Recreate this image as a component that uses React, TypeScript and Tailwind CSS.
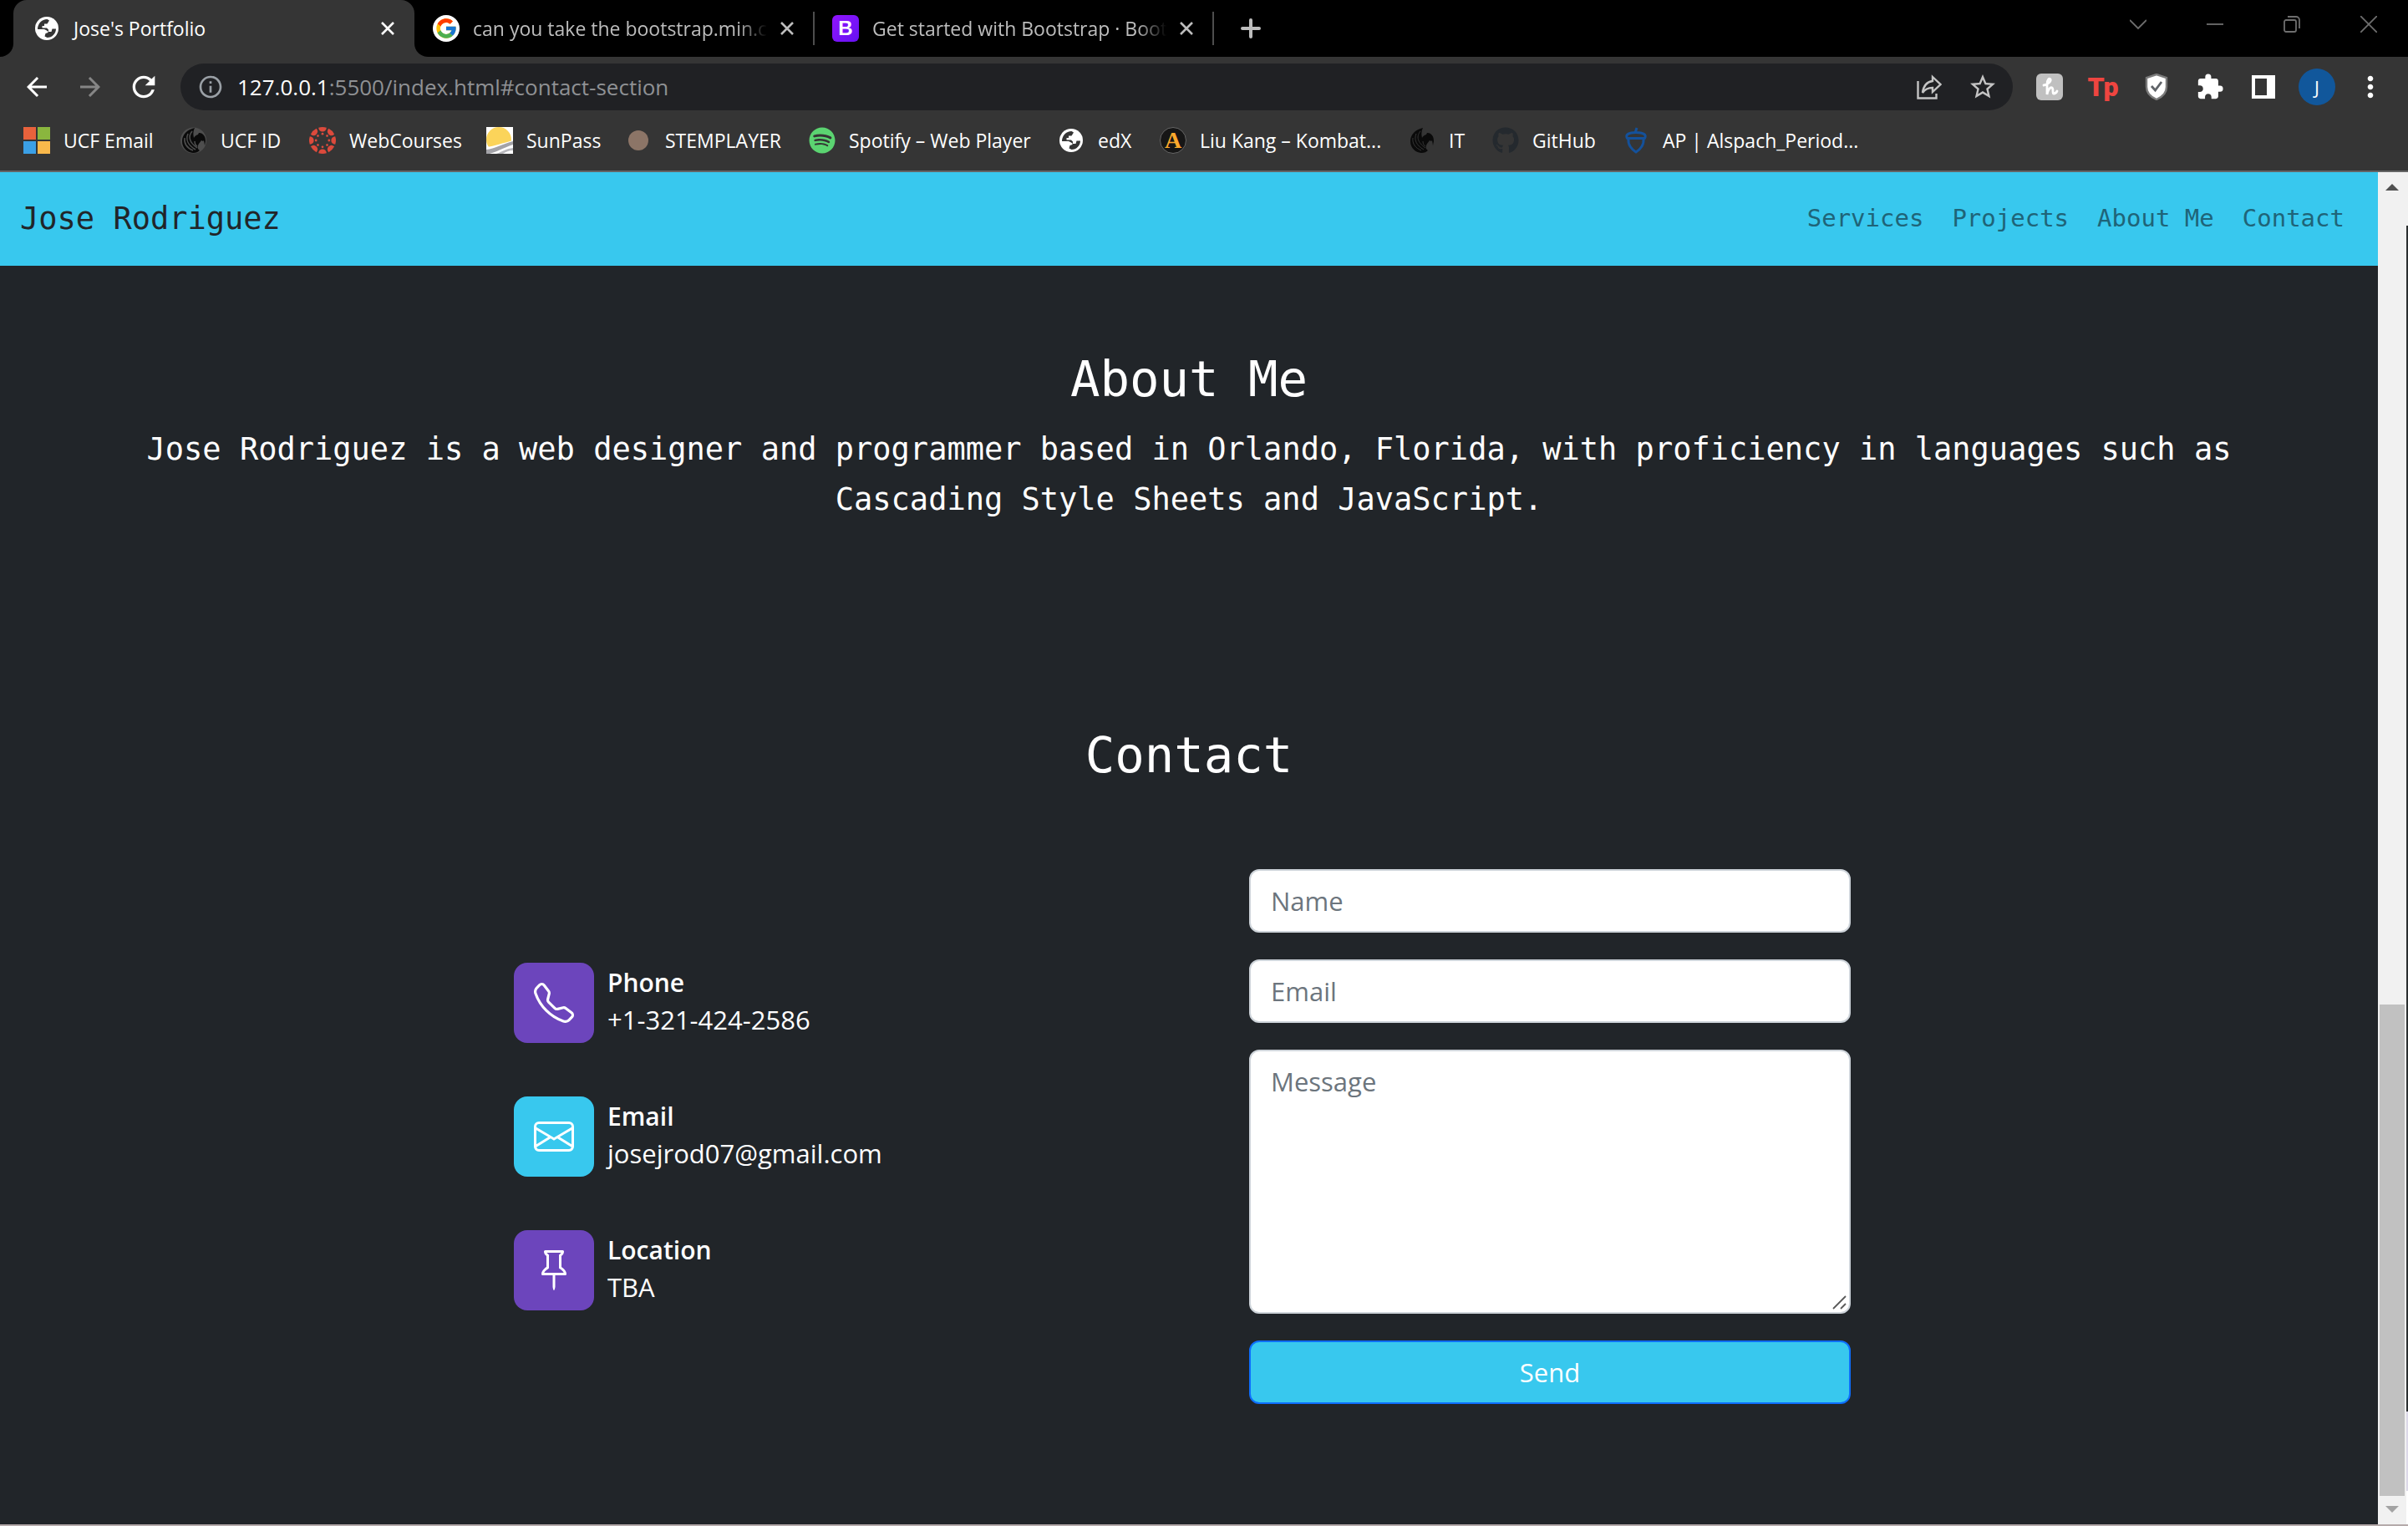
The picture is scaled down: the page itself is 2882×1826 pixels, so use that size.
import React from "react";
import { BsTelephone, BsEnvelope, BsPin } from "react-icons/bs";
import { FaSpotify, FaGithub } from "react-icons/fa";
import { FcGoogle } from "react-icons/fc";
import {
  MdArrowBack,
  MdArrowForward,
  MdRefresh,
  MdInfoOutline,
  MdExtension,
  MdMoreVert,
  MdStarBorder,
} from "react-icons/md";

const UI = "font-['Open_Sans','Noto_Sans',sans-serif]";

function Globe() {
  return (
    <svg viewBox="0 0 28 28" className="size-7">
      <circle cx="14" cy="14" r="14" fill="#fff" />
      <path d="M3 15C3 8.500 8 3 14.500 3l2.500 1.500-2.500 4H11V11H8.500v2.500H14l2 2V18h3.500l1-3.500H25C25 20 20.500 25 14.500 25l-3-1.500 1-3.500 3-1v-1.500l-2.500-1.500-2-1z" fill="#353535" />
    </svg>
  );
}

function CloseX() {
  return (
    <svg viewBox="0 0 16 16" className="size-4" fill="none" stroke="currentColor" strokeWidth="2.600">
      <path d="M1 1l14 14M15 1L1 15" />
    </svg>
  );
}

function BootstrapLogo() {
  return (
    <span className="flex size-8 shrink-0 items-center justify-center rounded-md bg-linear-to-br from-[#9013fe] to-[#6610f2] font-['Liberation_Sans',sans-serif] text-2xl leading-8 font-bold text-white">
      B
    </span>
  );
}

function MicrosoftLogo() {
  return (
    <svg viewBox="0 0 32 32" className="size-8">
      <path d="M0 0h15v15H0z" fill="#e8623c" />
      <path d="M17 0h15v15H17z" fill="#8ab63e" />
      <path d="M0 17h15v15H0z" fill="#3ba0e6" />
      <path d="M17 17h15v15H17z" fill="#f9b84b" />
    </svg>
  );
}

function Pegasus({ backed = false }: { backed?: boolean }) {
  return (
    <svg viewBox="0 0 32 32" className="size-8">
      {backed && <circle cx="15.500" cy="16" r="15.500" fill="#4e4e4e" />}
      <path
        d="M17 1C8 3 2 9 2 17c0 8 6 13.500 13 14 4 0 6-1 8-3-2-1-3-3-2-6 1-3 3-4 4-6l2 1 1-1 1 6 1-5c0-4-1-7-4-9-1-1-3-1-4-1l-1 2c-3 1-4 2-5 4-1-4-1-8 1-12z"
        fill="#0a0a0a"
      />
      <path
        d="M14 5c-5 6-4 13 6 20M9 8c-3 7 0 14 9 19M5 13c-1 7 3 12 10 15M17 17c0 3 1 5 3 6"
        fill="none"
        stroke={backed ? "#4e4e4e" : "#353535"}
        strokeWidth={backed ? "1.500" : "1"}
      />
    </svg>
  );
}

function CanvasLogo() {
  const angles = [0, 45, 90, 135, 180, 225, 270, 315];
  return (
    <svg viewBox="0 0 32 32" className="size-8" fill="#dc4a3c">
      {angles.map((a) => (
        <g key={a} transform={`rotate(${a} 16 16)`}>
          <path d="M11.200 0.800 Q16 -0.800 20.800 0.800 Q20.300 5.600 16 5.600 Q11.700 5.600 11.200 0.800 Z" />
          <circle cx="16" cy="8.200" r="1.400" />
        </g>
      ))}
    </svg>
  );
}

function SunPassLogo() {
  return (
    <svg viewBox="0 0 32 32" className="size-8">
      <path d="M0 0h32v32H0z" fill="#fff" />
      <circle cx="15" cy="15" r="15" fill="#fbd45a" />
      <path d="M0 24c10-1 20-5 32-8v16H0z" fill="#fff" />
      <path d="M0 27c10-1 20-7 32-10v4C20 25 12 30 4 32H0z" fill="#a3a3a8" />
      <path d="M12 32c8-3 12-6 20-7v3c-5 0-9 2-12 4z" fill="#b9b9bd" />
    </svg>
  );
}

function Dot() {
  return (
    <svg viewBox="0 0 32 32" className="size-8">
      <circle cx="16" cy="16" r="12" fill="#8c7567" />
    </svg>
  );
}

function ArcadeLogo() {
  return (
    <span className="flex size-8 items-center justify-center rounded-full border border-[#666] bg-[#161616] font-['Liberation_Serif',serif] text-[28px] leading-7 font-bold text-[#fba92c]">
      A
    </span>
  );
}

function Acorn() {
  return (
    <svg viewBox="0 0 32 32" className="size-8" fill="none" stroke="#14519b" strokeWidth="3">
      <path d="M15 7l2-6M6 14c-4-5 2-7.500 10-7.500S30 9 26 14M5 13.500h22" />
      <path d="M7 14c-1 7 4 13 9 16 5-3 10-9 9-16" />
    </svg>
  );
}

const bookmarks: { label: string; width: string; icon: React.ReactNode }[] = [
  { label: "UCF Email", width: "w-[188px]", icon: <MicrosoftLogo /> },
  { label: "UCF ID", width: "w-[154px]", icon: <Pegasus backed /> },
  { label: "WebCourses", width: "w-[212px]", icon: <CanvasLogo /> },
  { label: "SunPass", width: "w-[166px]", icon: <SunPassLogo /> },
  { label: "STEMPLAYER", width: "w-[220px]", icon: <Dot /> },
  { label: "Spotify – Web Player", width: "w-[298px]", icon: <FaSpotify className="size-8 text-[#5bd471]" /> },
  { label: "edX", width: "w-[122px]", icon: <Globe /> },
  { label: "Liu Kang – Kombat...", width: "w-[298px]", icon: <ArcadeLogo /> },
  { label: "IT", width: "w-[100px]", icon: <Pegasus /> },
  { label: "GitHub", width: "w-[156px]", icon: <FaGithub className="size-8 text-[#24292e]" /> },
  { label: "AP | Alspach_Period...", width: "w-[280px]", icon: <Acorn /> },
];

function TabStrip() {
  return (
    <div className="flex h-[68px] items-stretch bg-black text-[#bdbdbd]">
      <div className="flex w-4 items-end bg-[#353535]">
        <div className="h-full w-full rounded-br-2xl bg-black" />
      </div>
      <div className="bg-black">
        <div className="flex h-full w-[480px] items-center rounded-t-2xl bg-[#353535] pr-6 pl-[26px] text-white">
          <Globe />
          <span className="ml-[18px] flex-1 text-[23px]">Jose's Portfolio</span>
          <button aria-label="Close tab">
            <CloseX />
          </button>
        </div>
      </div>
      <div className="flex w-4 bg-[#353535]">
        <div className="h-full w-full rounded-bl-2xl bg-black" />
      </div>
      <div className="flex w-[461px] items-center pr-[23px] pl-[6px]">
        <span className="flex size-8 shrink-0 items-center justify-center rounded-full bg-white">
          <FcGoogle className="size-7" />
        </span>
        <span className="mr-4 ml-4 flex-1 overflow-hidden text-[23px] whitespace-nowrap mask-r-from-90% mask-r-to-100%">
          can you take the bootstrap.min.cs
        </span>
        <button aria-label="Close tab">
          <CloseX />
        </button>
      </div>
      <div className="my-auto h-10 w-[2px] bg-[#4d4d4d]" />
      <div className="flex w-[476px] items-center pr-[23px] pl-[21px]">
        <BootstrapLogo />
        <span className="mr-4 ml-4 flex-1 overflow-hidden text-[23px] whitespace-nowrap mask-r-from-90% mask-r-to-100%">
          Get started with Bootstrap · Boots
        </span>
        <button aria-label="Close tab">
          <CloseX />
        </button>
      </div>
      <div className="my-auto h-10 w-[2px] bg-[#4d4d4d]" />
      <button aria-label="New tab" className="ml-8">
        <svg viewBox="0 0 24 24" className="size-6" stroke="currentColor" strokeWidth="4" strokeLinecap="round">
          <path d="M12 2v20M2 12h20" />
        </svg>
      </button>
      <div className="ml-auto flex h-[58px] items-center pr-[1px] text-[#6e6e6e]">
        {[
          ["Search tabs", "M0 5l10 10L20 5"],
          ["Minimize", "M0 10h20"],
          ["Restore", "M3 5h10a2 2 0 0 1 2 2v10a2 2 0 0 1-2 2H3a2 2 0 0 1-2-2V7a2 2 0 0 1 2-2zM5 1h10a4 4 0 0 1 4 4v10"],
          ["Close window", "M0 0l20 20M20 0L0 20"],
        ].map(([name, d]) => (
          <button key={name} aria-label={name} className="flex w-[92px] justify-center">
            <svg viewBox="0 0 20 20" className="size-5" fill="none" stroke="currentColor" strokeWidth="1.800">
              <path d={d} />
            </svg>
          </button>
        ))}
      </div>
    </div>
  );
}

function Toolbar() {
  const tool = "flex w-16 items-center justify-center";
  return (
    <div className="flex h-[72px] items-center bg-[#353535] pr-[13px] pl-3 text-white">
      <button aria-label="Back" className={tool}>
        <MdArrowBack className="size-9" />
      </button>
      <button aria-label="Forward" className={`${tool} text-[#868686]`}>
        <MdArrowForward className="size-9" />
      </button>
      <button aria-label="Reload" className={tool}>
        <MdRefresh className="size-10" />
      </button>
      <div className="ml-3 flex h-14 flex-1 items-center rounded-full bg-[#202124] pr-1 pl-5">
        <MdInfoOutline className="size-8 text-[#9aa0a6]" />
        <span className="ml-4 flex-1 text-[26px] text-[#8f9194]">
          <span className="text-white">127.0.0.1</span>:5500/index.html#contact-section
        </span>
        <button aria-label="Share" className={`${tool} text-[#c4c4c4]`}>
          <svg viewBox="0 0 30 30" className="size-[30px]" fill="none" stroke="currentColor" strokeWidth="2.400">
            <path d="M1.500 8v20.500h22V23" />
            <path d="M19 3l9.500 9L19 21v-5c-5 0-9 1.500-12 6 1-8 5-13 12-14z" />
          </svg>
        </button>
        <button aria-label="Bookmark this page" className={`${tool} text-[#c4c4c4]`}>
          <MdStarBorder className="size-9" />
        </button>
      </div>
      <button aria-label="Honey" className={`${tool} ml-3`}>
        <span className="flex size-8 items-center justify-center rounded-md bg-[#c0c0c0]">
          <svg viewBox="0 0 32 32" className="size-8" fill="none" stroke="#fff" strokeWidth="2.800" strokeLinecap="round">
            <path d="M9 14c6-1 9-5 8-7s-4 0-4 6v12c1-6 4-9 6-8s0 7 2 7 3-1 4-3" />
          </svg>
        </span>
      </button>
      <button aria-label="Teleparty" className={`${tool} font-['Roboto',sans-serif] text-[32px] leading-8 font-black text-[#ef4540]`}>
        Tp
      </button>
      <button aria-label="Shield" className={tool}>
        <svg viewBox="0 0 28 32" className="h-8 w-7">
          <path d="M14 1l12 4v11c0 7-5 12-12 15C7 28 2 23 2 16V5z" fill="#fff" stroke="#7b7b7b" strokeWidth="2.400" />
          <path d="M8 15l4.500 5L20 10" fill="none" stroke="#5f6368" strokeWidth="2.800" />
        </svg>
      </button>
      <button aria-label="Extensions" className={tool}>
        <MdExtension className="size-[34px]" />
      </button>
      <button aria-label="Side panel" className={tool}>
        <svg viewBox="0 0 28 28" className="size-7">
          <path d="M0 0h28v28H0zM4 4v20h14V4z" fill="#fff" fillRule="evenodd" />
        </svg>
      </button>
      <button aria-label="Profile" className={tool}>
        <span className="flex size-11 items-center justify-center rounded-full bg-[#11579b] text-[22px] leading-none">J</span>
      </button>
      <button aria-label="Menu" className={tool}>
        <MdMoreVert className="size-10" />
      </button>
    </div>
  );
}

function Bookmarks() {
  return (
    <nav aria-label="Bookmarks" className="flex h-[66px] items-center border-b-2 border-[#646464] bg-[#353535] pb-2 pl-7 text-white">
      {bookmarks.map((b) => (
        <a key={b.label} href="#" className={`flex items-center text-[23px] leading-8 whitespace-nowrap ${b.width}`}>
          <span className="flex w-8 shrink-0 justify-center">{b.icon}</span>
          <span className="ml-4">{b.label}</span>
        </a>
      ))}
    </nav>
  );
}

const details = [
  { title: "Phone", value: "+1-321-424-2586", tile: "bg-[#6c45bc]", Icon: BsTelephone },
  { title: "Email", value: "josejrod07@gmail.com", tile: "bg-[#38c8ee]", Icon: BsEnvelope },
  { title: "Location", value: "TBA", tile: "bg-[#6c45bc]", Icon: BsPin },
];

const field =
  "block w-full rounded-xl border-2 border-[#ced4da] bg-white px-6 py-3 text-[31px] leading-[48px] text-[#212529] placeholder:text-[#6c757d] placeholder:opacity-100";

function Page() {
  return (
    <main className="flex-1 bg-[#212529] text-white">
      <header className="flex h-28 items-center justify-between bg-[#38c8ee] pr-10 pl-6 font-['DejaVu_Sans_Mono',monospace]">
        <a href="#" className="text-[37px] text-[#212529]">
          Jose Rodriguez
        </a>
        <nav className="flex gap-[34px] text-[29px] text-[#1f6478]">
          <a href="#services">Services</a>
          <a href="#projects">Projects</a>
          <a href="#about">About Me</a>
          <a href="#contact-section">Contact</a>
        </nav>
      </header>

      <section id="about" className="px-24 pt-[98px] text-center font-['DejaVu_Sans_Mono',monospace]">
        <h1 className="text-[59px] leading-[76px]">About Me</h1>
        <p className="mx-auto mt-4 max-w-[2640px] text-[37px] leading-[60px]">
          Jose Rodriguez is a web designer and programmer based in Orlando, Florida, with proficiency in languages such
          as Cascading Style Sheets and JavaScript.
        </p>
      </section>

      <section id="contact-section" className="px-24 pt-[238px]">
        <h1 className="text-center font-['DejaVu_Sans_Mono',monospace] text-[59px] leading-[76px]">Contact</h1>
        <div className="mx-auto mt-[98px] flex max-w-[1616px] items-center justify-between pr-4">
          <dl className="flex flex-col gap-16">
            {details.map(({ title, value, tile, Icon }) => (
              <div key={title} className="flex gap-4">
                <div className={`flex size-24 items-center justify-center rounded-2xl ${tile}`}>
                  <Icon className="size-12" />
                </div>
                <div className="pt-[2px] leading-[44px]">
                  <dt className="text-[30px] font-semibold">{title}</dt>
                  <dd className="text-[31px]">{value}</dd>
                </div>
              </div>
            ))}
          </dl>
          <form className="flex w-[720px] flex-col gap-8" onSubmit={(e) => e.preventDefault()}>
            <input type="text" aria-label="Name" placeholder="Name" className={field} />
            <input type="email" aria-label="Email" placeholder="Email" className={field} />
            <div className="relative">
              <textarea aria-label="Message" placeholder="Message" rows={6} className={`${field} resize-none`} />
              <svg
                viewBox="0 0 18 18"
                className="pointer-events-none absolute right-1 bottom-1 size-[18px]"
                stroke="#5a5a5a"
                strokeWidth="1.800"
              >
                <path d="M1 16L16 1M10 16l6-6" />
              </svg>
            </div>
            <button
              type="submit"
              className="rounded-xl border-2 border-[#0d6efd] bg-[#38c8ee] py-3 text-[31px] leading-[48px]"
            >
              Send
            </button>
          </form>
        </div>
      </section>
    </main>
  );
}

function Scrollbar() {
  return (
    <div className="flex w-9 border-r-2 border-[#2b2f30] bg-[#f1f1f1]">
      <div className="flex w-full flex-col items-center px-[2px] py-[14px]">
        <svg viewBox="0 0 16 8" className="h-2 w-4">
          <path d="M8 0l8 8H0z" fill="#505050" />
        </svg>
        <div className="flex-1" />
        <div className="mb-3 h-[588px] w-full bg-[#c1c1c1]" />
        <svg viewBox="0 0 16 8" className="h-2 w-4">
          <path d="M0 0h16L8 8z" fill="#a3a3a3" />
        </svg>
      </div>
      <div className="-mr-[2px] flex w-[2px] shrink-0 flex-col">
        <div className="h-16 bg-[#f1f1f1]" />
        <div className="flex-1" />
        <div className="h-[95px] bg-[#dcd8e8]" />
        <div className="h-10 bg-white" />
      </div>
    </div>
  );
}

export default function App() {
  return (
    <div className={`flex min-h-screen flex-col border-b-2 border-[#b5aaaa] ${UI}`}>
      <TabStrip />
      <Toolbar />
      <Bookmarks />
      <div className="flex flex-1">
        <Page />
        <Scrollbar />
      </div>
    </div>
  );
}
